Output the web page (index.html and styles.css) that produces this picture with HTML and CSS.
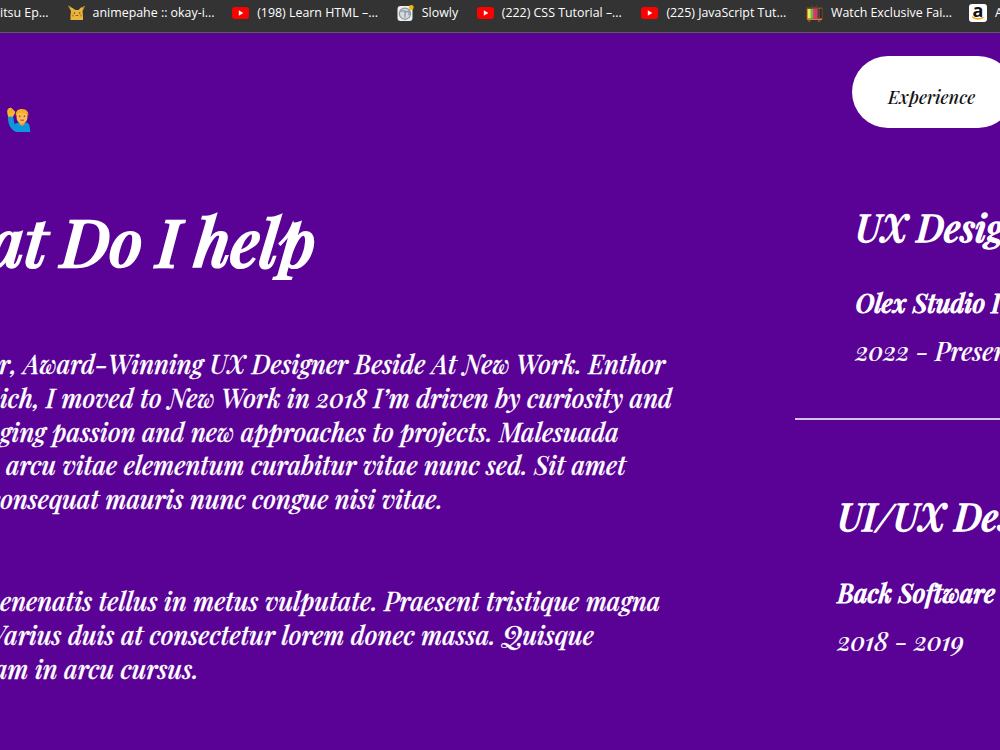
FILE: index.html
```html
<!DOCTYPE html>
<html lang="en">
<head>
  <meta charset="UTF-8" />
  <meta name="viewport" content="width=device-width, initial-scale=1.0" />
  <title>Portfolio</title>
  <link rel="stylesheet" href="styles.css">
</head>
<body>
  <svg class="defs" width="0" height="0">
    <symbol id="youtube" viewBox="0 0 17 12">
      <rect width="17" height="12" rx="3" fill="#f00" />
      <path d="M6.8 3.3v5.4L11.3 6z" fill="#fff" />
    </symbol>
  </svg>

  <nav class="bookmarks">
    <div class="bookmark first"><span>itsu Ep...</span></div>
    <div class="bookmark">
      <svg width="17" height="16" viewBox="0 0 17 16">
        <path d="M0 .5 4.5 3l3 2h3L13 2.5 17 1l-2.500 5 .5 4.500V15H2.500v-4.500L3 6z" fill="#e9b53c" />
        <path d="M0 .5 3 1.8 2.3 3.2zM17 1l-3 1.2.9 1.6z" fill="#a87a28" />
        <circle cx="6.4" cy="8" r=".8" fill="#5b431c" />
        <circle cx="11.7" cy="8" r=".8" fill="#5b431c" />
        <circle cx="4.8" cy="10.6" r="1.1" fill="#d97a32" />
        <circle cx="13.2" cy="10.6" r="1.1" fill="#d97a32" />
        <path d="M7.5 10.5h3" stroke="#9c6424" />
      </svg>
      <span>animepahe :: okay-i...</span>
    </div>
    <div class="bookmark">
      <svg width="17" height="12"><use href="#youtube" /></svg>
      <span>(198) Learn HTML –...</span>
    </div>
    <div class="bookmark short">
      <svg width="17" height="17" viewBox="0 0 17 17">
        <rect x=".5" y="1" width="15" height="15" rx="3" fill="#eceeef" />
        <circle cx="8" cy="8.7" r="5.6" fill="#d5dade" stroke="#8b979f" stroke-width="1.2" />
        <path d="M4 6.5c2-1.5 3.5 0 4.5-1M8 6v6.5M8.5 7l3.5-.8v4" fill="none" stroke="#8b979f" stroke-width="1.3" />
        <circle cx="14.3" cy="2.5" r="2.4" fill="#f5b800" />
      </svg>
      <span>Slowly</span>
    </div>
    <div class="bookmark">
      <svg width="17" height="12"><use href="#youtube" /></svg>
      <span>(222) CSS Tutorial –...</span>
    </div>
    <div class="bookmark">
      <svg width="17" height="12"><use href="#youtube" /></svg>
      <span>(225) JavaScript Tut...</span>
    </div>
    <div class="bookmark tv">
      <svg width="17" height="18" viewBox="0 0 17 18">
        <path d="M5 1l3.500 3L12 .5" fill="none" stroke="#4e4e4e" />
        <rect x=".5" y="3.500" width="16" height="12.500" rx="1" fill="#8a4b22" />
        <rect x="1.500" y="5" width="3.500" height="9.500" fill="#f3e94c" />
        <rect x="4.500" y="5" width="2.500" height="9.500" fill="#4fc94a" />
        <rect x="7" y="5" width="2.500" height="9.500" fill="#ec2f8c" />
        <rect x="9.500" y="5" width="2" height="9.500" fill="#e03a3a" />
        <rect x="11.500" y="5" width="1.500" height="9.500" fill="#2c3d9c" />
        <path d="M14.700 5v9" stroke="#33251c" stroke-width="2" />
        <path d="M1 15.300h15" stroke="#e88a3a" />
        <path d="M2 17h2.500M12 17h2.500" stroke="#c46a2b" />
      </svg>
      <span>Watch Exclusive Fai...</span>
    </div>
    <div class="bookmark">
      <div class="amazon">
        <b>a</b>
        <svg width="14" height="4" viewBox="0 0 14 4"><path d="M1 .8c3.5 2.600 8 2.600 11.500.4" fill="none" stroke="#f90" stroke-width="1.300" /></svg>
      </div>
      <span>Amazon</span>
    </div>
  </nav>

  <main>
    <section class="about">
      <svg class="wave" width="24" height="26" viewBox="0 0 24 26">
        <path d="M.8 9.500 6 9l1.500 8 4-1.500h8c3 .8 3.500 3.500 3.800 9.500H9C3.500 22.500 1 17 .8 9.500z" fill="#0c97dc" />
        <path d="M.3 3.500C.8 1.500 3 .2 4.600 1.200 6 2 7 4 8.300 4.800 8 7 6.500 8.500 6 9.700H1.200C.8 8.500-.1 6 .3 3.500z" fill="#fbb92e" />
        <path d="M2 2.500l1 4M4.300 1.500l.8 4.500" stroke="#d9932a" stroke-width=".7" />
        <path d="M12.500 14h5v3.500L15 19l-2.500-1.500z" fill="#e89a33" />
        <ellipse cx="15" cy="9.900" rx="5.500" ry="6.800" fill="#fdb955" />
        <path d="M9 9.500C8 4.500 10.500 2 15 2s7.400 3 6 8l-1-3.500c-3-.8-6-1-9.300-.3z" fill="#f3b01c" />
        <circle cx="12.800" cy="9.300" r=".8" fill="#5d4031" />
        <circle cx="17.400" cy="9.300" r=".8" fill="#5d4031" />
        <path d="M13.300 13.200h3.600" stroke="#c4502d" stroke-width="1.200" />
      </svg>
      <h1>at Do I help</h1>
      <p>
        <span class="line award">r, Award-Winning UX Designer Beside At New Work. Enthor</span>
        <span class="line">ich, I moved to New Work in 2018 I’m driven by curiosity and</span>
        <span class="line">ging passion and new approaches to projects. Malesuada</span>
        <span class="line arcu">arcu vitae elementum curabitur vitae nunc sed. Sit amet</span>
        <span class="line cons">consequat mauris nunc congue nisi vitae.</span>
      </p>
      <p>
        <span class="line">enenatis tellus in metus vulputate. Praesent tristique magna</span>
        <span class="line varius">Varius duis at consectetur lorem donec massa. Quisque</span>
        <span class="line cursus">am in arcu cursus.</span>
      </p>
    </section>

    <section class="experience">
      <button class="pill">Experience</button>
      <div class="job">
        <h2>UX Designer</h2>
        <h3>Olex Studio Inc</h3>
        <div class="date">2022 - Present</div>
      </div>
      <hr>
      <div class="job second">
        <h2>UI/UX Designer</h2>
        <h3>Back Software Inc</h3>
        <div class="date">2018 - 2019</div>
      </div>
    </section>
  </main>
</body>
</html>
```
FILE: styles.css
```css
body {
  margin: 0;
  height: 750px;
  overflow: hidden;
  background: #590295;
  color: #fff;
  font-family: "Playfair Display", "Liberation Serif", serif;
  font-style: italic;
  font-weight: 500;
  white-space: nowrap;
}

.defs {
  display: block;
}

.bookmarks {
  display: flex;
  height: 32px;
  background: #333;
  border-bottom: 1px solid #5c5a5e;
  overflow: hidden;
  font: 12.4px "Open Sans", sans-serif;
}

.bookmark {
  display: flex;
  flex: none;
  align-items: center;
  gap: 8px;
  width: 164.6px;
  height: 26px;
}

.bookmark svg {
  flex: none;
}

.bookmark span {
  padding-bottom: 1px;
}

.bookmark.first {
  width: 67.6px;
}

.bookmark.short {
  width: 80px;
}

.bookmark.tv {
  width: 163px;
}

.amazon {
  display: flex;
  flex-direction: column;
  align-items: center;
  width: 18px;
  height: 18px;
  border-radius: 3px;
  background: #fff;
  color: #111;
}

.amazon b {
  font-size: 18px;
  line-height: 12px;
}

main {
  display: flex;
}

.about {
  flex: none;
  width: 794.5px;
  padding-top: 74px;
  box-sizing: border-box;
}

.wave {
  display: block;
  margin-left: 7px;
}

h1 {
  margin: 63px 0;
  text-indent: -11px;
  font-size: 65.8px;
  line-height: 88px;
  font-weight: 500;
  word-spacing: -2.5px;
  -webkit-text-stroke: 2.2px #fff;
}

p {
  margin: 0 0 68px;
  font-size: 25.35px;
  line-height: 33.8px;
  -webkit-text-stroke: 0.3px #fff;
}

.line {
  display: block;
}

.award {
  text-indent: -1px;
}

.arcu {
  text-indent: 6px;
}

.cons {
  text-indent: -11px;
}

.varius {
  text-indent: -10.5px;
}

.cursus {
  text-indent: -6px;
}

.experience {
  flex: none;
  width: 300px;
  padding-top: 23px;
}

.pill {
  display: block;
  width: 162px;
  height: 72px;
  margin-left: 57px;
  padding: 9px 2px 0 0;
  border: none;
  border-radius: 36px;
  background: #fff;
  color: #111;
  font: inherit;
  font-size: 18.1px;
}

.job {
  padding: 74px 0 0 61px;
}

.job.second {
  padding: 71px 0 0 43px;
}

h2 {
  margin: 0 0 34px;
  font-size: 37px;
  line-height: 50px;
  font-weight: 500;
  -webkit-text-stroke: 1.3px #fff;
}

h3 {
  margin: 0 0 14px;
  font-size: 25.35px;
  line-height: 34px;
  font-weight: 500;
  -webkit-text-stroke: 1px #fff;
}

.second h2 {
  margin-bottom: 35px;
}

.date {
  font-size: 25.35px;
  line-height: 34px;
  -webkit-text-stroke: 0.2px #fff;
}

hr {
  height: 1.5px;
  margin: 50px 0 0;
  border: none;
  background: #d3c3e0;
}
```
